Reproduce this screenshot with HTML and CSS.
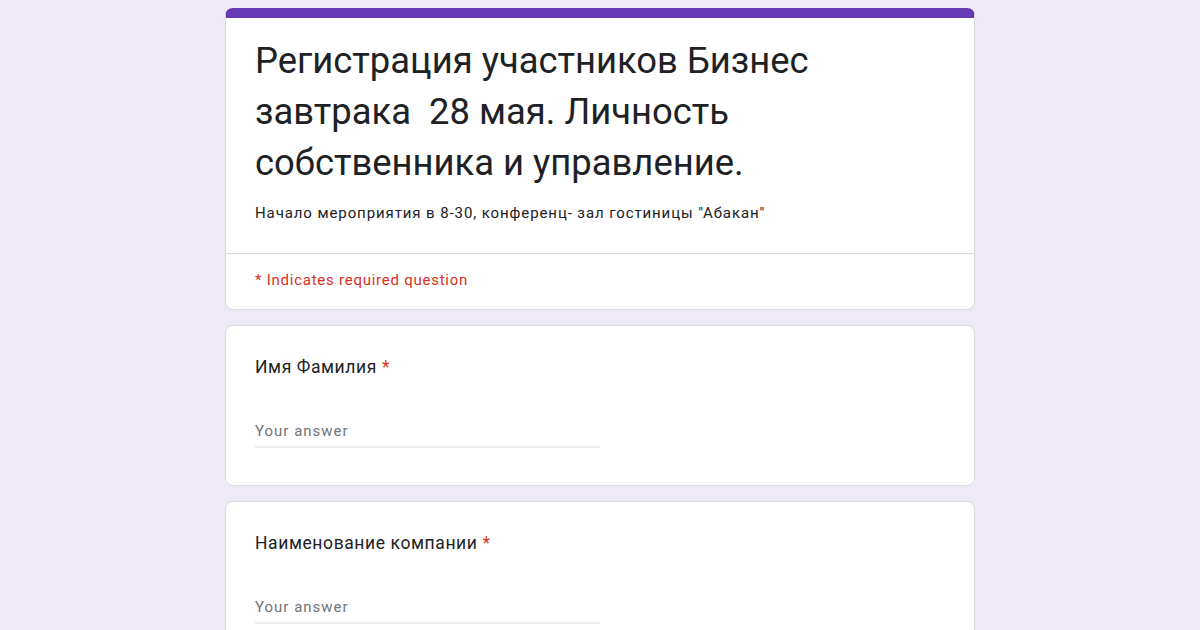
FILE: index.html
```html
<!DOCTYPE html>
<html lang="ru">
  <head>
    <meta charset="UTF-8" />
    <meta name="viewport" content="width=device-width, initial-scale=1.0" />
    <link rel="stylesheet" href="styles.css">
  </head>
  <body>
    <div class="form-container">
      <div class="card header-card">
        <div class="header-top">
          <div class="form-title">
            Регистрация участников Бизнес<br />
            завтрака&nbsp; 28 мая. Личность<br />
            собственника и управление.
          </div>
          <div class="form-desc">
            Начало мероприятия в 8-30, конференц- зал гостиницы "Абакан"
          </div>
        </div>
        <div class="required-note">* Indicates required question</div>
      </div>

      <div class="card question">
        <div class="question-title">Имя Фамилия <span class="star">*</span></div>
        <div class="answer">Your answer</div>
      </div>

      <div class="card question">
        <div class="question-title">Наименование компании <span class="star">*</span></div>
        <div class="answer">Your answer</div>
      </div>
    </div>
  </body>
</html>
```

FILE: styles.css
```css
* {
  box-sizing: border-box;
}

body {
  margin: 0;
  background-color: #ede9f7;
  font-family: Roboto, "Liberation Sans", sans-serif;
  color: #202124;
}

.form-container {
  width: 750px;
  margin: 0 auto;
  padding-top: 8px;
}

.card {
  background-color: #fff;
  border: 1px solid #dadce0;
  border-radius: 8px;
  margin-bottom: 15px;
}

.header-card {
  border-top: 10px solid #673ab7;
}

.header-top {
  padding: 17px 29px 29px;
  border-bottom: 1px solid #dadce0;
}

.form-title {
  font-size: 36.4px;
  line-height: 51px;
  font-weight: 400;
  color: #202124;
}

.form-desc {
  margin-top: 14px;
  font-size: 15px;
  line-height: 22px;
  letter-spacing: 0.9px;
}

.required-note {
  padding: 15px 29px 18px;
  font-size: 15px;
  line-height: 22px;
  letter-spacing: 0.75px;
  color: #d93025;
}

.question {
  padding: 29px 29px 37px;
}

.question-title {
  font-size: 17.5px;
  line-height: 24px;
  letter-spacing: 0.6px;
}

.star {
  color: #d93025;
}

.answer {
  margin-top: 41px;
  width: 50%;
  padding-bottom: 4px;
  border-bottom: 2px solid #eeeeee;
  font-size: 15px;
  line-height: 22px;
  color: #70757a;
  letter-spacing: 1px;
}
```
